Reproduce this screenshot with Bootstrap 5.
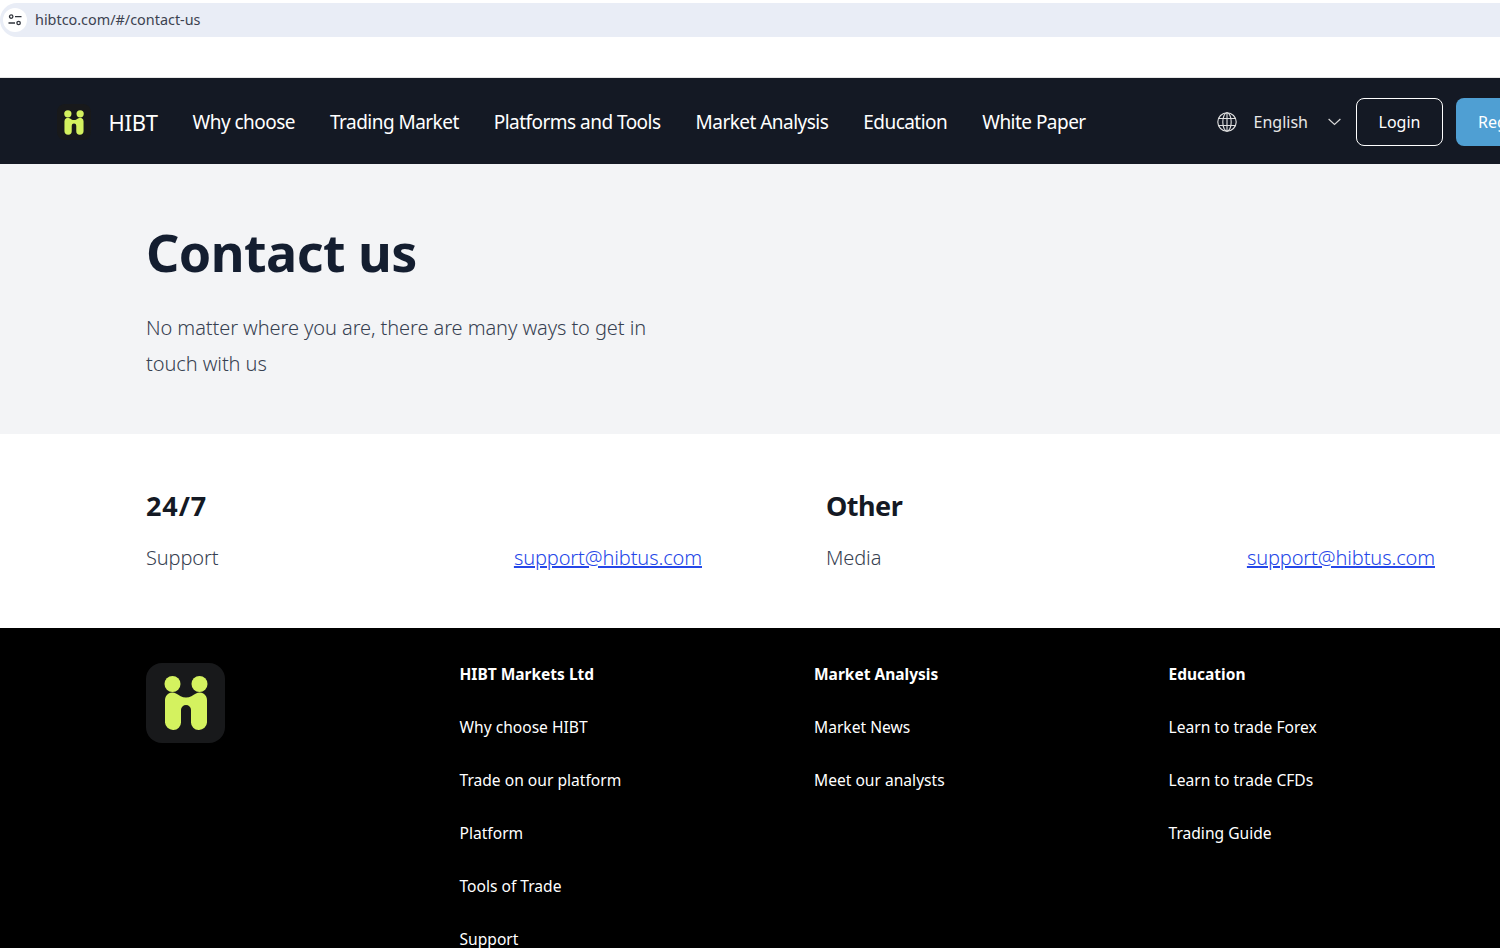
<!DOCTYPE html>
<html lang="en">
<head>
<meta charset="utf-8">
<title>Contact us</title>
<link href="https://cdn.jsdelivr.net/npm/bootstrap@5.3.0/dist/css/bootstrap.min.css" rel="stylesheet">
<style>
html,body{height:948px;overflow:hidden;background:#fff}
body{font-family:"Noto Sans","Open Sans",sans-serif;width:1500px}
.addr-wrap{height:78px;padding-top:3px;background:#fff;border-bottom:1px solid #e6e6e6}
.addr-bar{height:34px;background:#e9edf6;border-radius:17px 0 0 17px;padding-left:3px;font-size:14.4px;color:#3c4250;gap:8px}
.addr-icon{width:24px;height:24px;border-radius:50%;background:#fff}
.top-nav{height:86px;background:#141924;padding:2px 0 0 57px;white-space:nowrap;width:1562px}
.brand-box{width:34px;height:36px;border-radius:8px;background:#18191b}
.brand-name{font-size:22px;color:#fff;margin-left:17.5px;margin-right:35px;line-height:1;letter-spacing:-.3px}
.nav-item-t{font-size:19px;color:#fff;margin-right:35px;text-decoration:none;letter-spacing:-.53px}
.lang{color:#e8e8e8;font-size:16px;margin-left:auto;gap:17px}
.lang-chev{margin:0 15px 0 3px}
.btn-login{width:87px;height:48px;border:1px solid #fff;border-radius:8px;color:#fff;font-size:16px;background:transparent;padding:0;margin-right:13px}
.btn-reg{width:106px;height:48px;border:0;border-radius:8px;background:#4f9fd3;color:#fff;font-size:16px;padding:0}
.hero-band{height:270px;background:#f3f4f6;padding:52px 0 0 146px}
.hero-title{font-size:52px;font-weight:700;color:#141e30;line-height:72px;margin:0 0 22px;letter-spacing:-.55px}
.hero-sub{font-size:20px;font-weight:300;line-height:36px;color:#374151;width:520px;margin:0;letter-spacing:-.08px}
.contact-band{height:194px;padding:52px 65px 0 146px;gap:124px}
.contact-col-a{flex:0 0 556px}
.contact-col-b{flex:1 1 0}
.contact-h{font-size:27px;font-weight:700;color:#141924;line-height:40px;margin:0 0 14px}
.contact-h-a{letter-spacing:.9px}
.contact-h-b{letter-spacing:-.5px}
.contact-row{font-size:20px;font-weight:300;color:#374151;line-height:36px;letter-spacing:-.12px}
.contact-row a{color:#2547e8}
.foot-band{height:320px;background:#000;padding:35px 0 0 146px;color:#fff}
.foot-logo{width:79px;height:80px;border-radius:16px;background:#18191b}
.foot-cols{margin-left:234.5px;margin-top:-1px}
.foot-col{width:354.5px}
.foot-h{font-size:15.5px;font-weight:700;line-height:24px;margin:0 0 29px}
.foot-col a{display:block;color:#fff;text-decoration:none;font-size:15.6px;line-height:24px;margin-bottom:29px}
</style>
</head>
<body>
<div class="addr-wrap">
  <div class="addr-bar d-flex align-items-center">
    <span class="addr-icon d-flex align-items-center justify-content-center">
      <svg width="14" height="12" viewBox="0 0 14 12" fill="none" stroke="#30343c" stroke-width="1.3"><circle cx="3.2" cy="2.6" r="1.7"/><path d="M7 2.6h6.5M.5 9h6.5"/><circle cx="10.6" cy="9" r="1.7"/></svg>
    </span>
    <span>hibtco.com/#/contact-us</span>
  </div>
</div>
<nav class="top-nav d-flex align-items-center">
  <span class="brand-box d-flex align-items-center justify-content-center flex-shrink-0">
    <svg width="20" height="25" viewBox="0 0 44 54"><use href="#hlogo"/></svg>
  </span>
  <span class="brand-name">HIBT</span>
  <a class="nav-item-t" href="#">Why choose</a>
  <a class="nav-item-t" href="#">Trading Market</a>
  <a class="nav-item-t" href="#">Platforms and Tools</a>
  <a class="nav-item-t" href="#">Market Analysis</a>
  <a class="nav-item-t" href="#">Education</a>
  <a class="nav-item-t" href="#">White Paper</a>
  <span class="lang d-flex align-items-center">
    <svg width="20" height="20" viewBox="0 0 20 20" fill="none" stroke="#e0e0e0" stroke-width="1.1"><circle cx="10" cy="10" r="9.2"/><ellipse cx="10" cy="10" rx="4.2" ry="9.2"/><path d="M10 .8v18.4M1.6 6.5h16.8M1.6 13.5h16.800"/></svg>
    <span>English</span>
    <svg class="lang-chev" width="13" height="8" viewBox="0 0 13 8" fill="none" stroke="#d8d8d8" stroke-width="1.2"><path d="M.6 1l5.900 5.400L12.400 1"/></svg>
  </span>
  <button class="btn-login" type="button">Login</button>
  <button class="btn-reg flex-shrink-0" type="button">Register</button>
</nav>
<section class="hero-band">
  <h1 class="hero-title">Contact us</h1>
  <p class="hero-sub">No matter where you are, there are many ways to get in touch with us</p>
</section>
<section class="contact-band d-flex">
  <div class="contact-col-a">
    <h2 class="contact-h contact-h-a">24/7</h2>
    <div class="contact-row d-flex justify-content-between"><span>Support</span><a href="#">support@hibtus.com</a></div>
  </div>
  <div class="contact-col-b">
    <h2 class="contact-h contact-h-b">Other</h2>
    <div class="contact-row d-flex justify-content-between"><span>Media</span><a href="#">support@hibtus.com</a></div>
  </div>
</section>
<footer class="foot-band d-flex align-items-start">
  <span class="foot-logo d-flex align-items-center justify-content-center flex-shrink-0">
    <svg width="44" height="54" viewBox="0 0 44 54">
      <g id="hlogo" fill="#d4f25f">
        <circle cx="8.5" cy="8" r="8"/><circle cx="35.5" cy="8" r="8"/>
        <path d="M1 24a7.5 7.5 0 0 1 11-6.6c3 1.7 6 4.100 10 4.100s7-2.400 10-4.100a7.500 7.500 0 0 1 11 6.600v22.500a8 8 0 0 1-8 7.500h-.5a7.500 7.500 0 0 1-7.500-7.500V34a5 5 0 0 0-10 0v12.500a7.500 7.500 0 0 1-7.500 7.500H9a8 8 0 0 1-8-7.500z"/>
      </g>
    </svg>
  </span>
  <div class="foot-cols d-flex">
    <div class="foot-col">
      <h3 class="foot-h">HIBT Markets Ltd</h3>
      <a href="#">Why choose HIBT</a>
      <a href="#">Trade on our platform</a>
      <a href="#">Platform</a>
      <a href="#">Tools of Trade</a>
      <a href="#">Support</a>
    </div>
    <div class="foot-col">
      <h3 class="foot-h">Market Analysis</h3>
      <a href="#">Market News</a>
      <a href="#">Meet our analysts</a>
    </div>
    <div class="foot-col">
      <h3 class="foot-h">Education</h3>
      <a href="#">Learn to trade Forex</a>
      <a href="#">Learn to trade CFDs</a>
      <a href="#">Trading Guide</a>
    </div>
  </div>
</footer>
<script src="https://cdn.jsdelivr.net/npm/bootstrap@5.3.0/dist/js/bootstrap.bundle.min.js"></script>
</body>
</html>
